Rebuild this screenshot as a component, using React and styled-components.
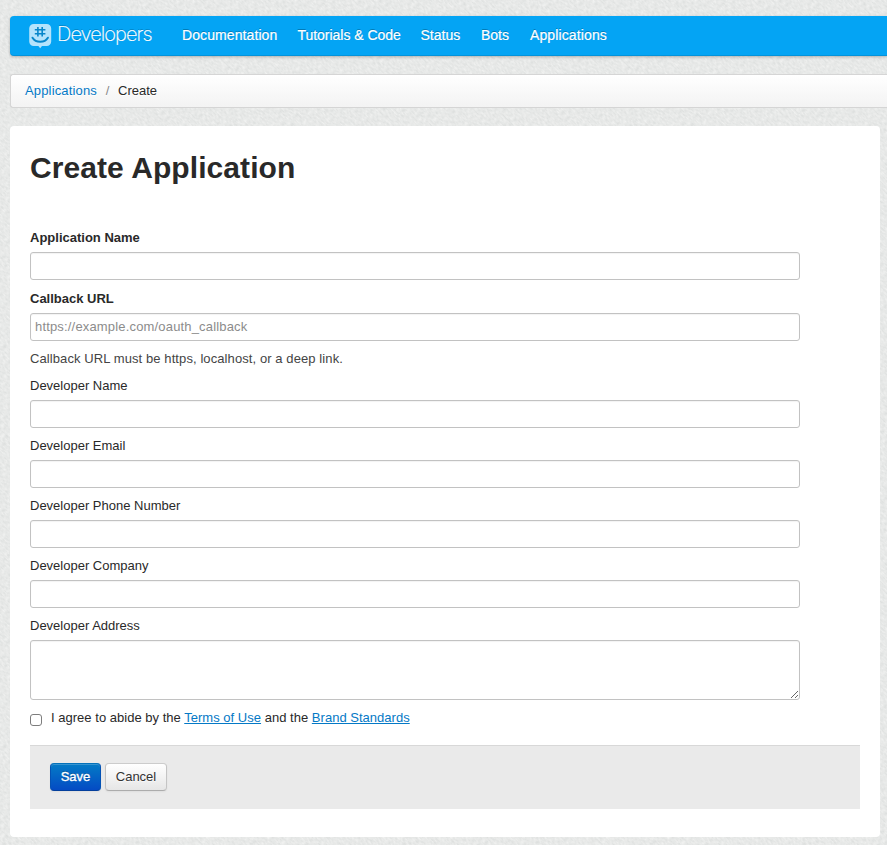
import React from "react";
import styled, { createGlobalStyle } from "styled-components";

const paper = encodeURIComponent(
  `<svg xmlns="http://www.w3.org/2000/svg" width="400" height="400">
    <filter id="g" x="0" y="0" width="100%" height="100%" color-interpolation-filters="sRGB">
      <feTurbulence type="fractalNoise" baseFrequency="0.28 0.6" numOctaves="2" seed="4"/>
      <feColorMatrix values="0.13 0 0 0 0.841  0.12 0 0 0 0.852  0.12 0 0 0 0.848  0 0 0 0 1"/>
    </filter>
    <g transform="rotate(45 200 200)"><rect x="-100" y="-100" width="600" height="600" filter="url(#g)"/></g>
  </svg>`
);

const GlobalStyle = createGlobalStyle`
  * { box-sizing: border-box; }
  html { height: 100%; }
  body {
    margin: 0;
    height: 100%;
    background: #e6e8e7 url("data:image/svg+xml,${paper}");
    color: #292929;
    font: 13px/18px "Liberation Sans", Arial, sans-serif;
  }
`;

const Page = styled.div`
  padding: 16px 0 0 10px;
`;

const NavBar = styled.header`
  display: flex;
  align-items: center;
  height: 40px;
  padding-left: 19px;
  border-radius: 4px 0 0 4px;
  background: #04a4f4;
  box-shadow: 0 1px 3px rgba(0, 0, 0, 0.25), inset 0 -1px 0 rgba(0, 0, 0, 0.1);
`;

const Brand = styled.a`
  display: flex;
  align-items: center;
  width: 153px;
  height: 40px;
  flex: none;
  color: #fff;
  text-decoration: none;
`;

const BrandName = styled.span`
  margin: -4px 0 0 5px;
  font: 200 20px/24px Inter, sans-serif;
  letter-spacing: -0.95px;
  -webkit-text-stroke: 0.2px #fff;
  text-shadow: 0 -1px 0 rgba(0, 0, 0, 0.2);
`;

const Nav = styled.nav`
  display: flex;
  gap: 20px;
  margin-top: -2px;
`;

const NavLink = styled.a`
  width: ${(p) => p.$width}px;
  color: #fff;
  font-size: 14px;
  text-decoration: none;
  white-space: nowrap;
  letter-spacing: ${(p) => p.$spacing}px;
  -webkit-text-stroke: 0.2px #fff;
  text-shadow: 0 -1px 0 rgba(0, 0, 0, 0.25);
`;

const Breadcrumb = styled.div`
  display: flex;
  height: 34px;
  margin-top: 18px;
  padding: 7px 14px;
  border: 1px solid #d5d5d5;
  border-right: 0;
  border-radius: 3px 0 0 3px;
  background: linear-gradient(#fff, #f3f3f3);
  text-shadow: 0 1px 0 #fff;
`;

const Divider = styled.span`
  width: 21px;
  text-align: center;
  color: #888;
`;

const Link = styled.a`
  color: #0479c6;
  letter-spacing: ${(p) => (p.$underlined ? "0.02px" : "0.16px")};
  text-decoration: ${(p) => (p.$underlined ? "underline" : "none")};
  text-underline-offset: 1px;
`;

const Panel = styled.main`
  width: 870px;
  height: 711px;
  margin-top: 18px;
  padding: 24px 20px 28px;
  border-radius: 4px;
  background: #fff;
`;

const Title = styled.h1`
  margin: 0 0 42px;
  font-size: 30px;
  line-height: 36px;
  letter-spacing: 0.08px;
`;

const Form = styled.form`
  display: flex;
  flex-direction: column;
`;

const Field = styled.label`
  display: block;
  margin-bottom: 9px;
`;

const Caption = styled.span`
  display: block;
  margin-bottom: 5px;
  font-weight: ${(p) => (p.$required ? 700 : 400)};
  line-height: ${(p) => (p.$required ? 19 : 18)}px;
`;

const Input = styled.input`
  display: block;
  width: 770px;
  height: 28px;
  padding: 3px 4px 5px;
  border: 1px solid #c2c2c2;
  border-radius: 3px;
  background: #fff;
  box-shadow: inset 0 1px 1px rgba(0, 0, 0, 0.05);
  color: #555;
  font: 13px/18px "Liberation Sans", Arial, sans-serif;
  letter-spacing: 0.17px;
  &::placeholder { color: #8c8c8c; opacity: 1; }
`;

const TextArea = styled(Input).attrs({ as: "textarea" })`
  height: 60px;
  resize: both;
`;

const Help = styled.p`
  margin: 0 0 9px;
  color: #444;
  letter-spacing: 0.09px;
`;

const Agreement = styled.label`
  display: flex;
  height: 18px;
  letter-spacing: 0.02px;
`;

const Checkbox = styled.input`
  appearance: none;
  flex: none;
  width: 12px;
  height: 12px;
  margin: 5px 9px 0 0;
  border: 1px solid #7d7d7d;
  border-radius: 3px;
  background: #fff;
`;

const Actions = styled.div`
  display: flex;
  gap: 4px;
  height: 64px;
  margin-top: 18px;
  padding: 17px 20px 18px;
  border-top: 1px solid #d8d8d8;
  background: #eaeaea;
`;

const Button = styled.button`
  width: ${(p) => p.$width}px;
  height: 28px;
  padding: 0 0 1px;
  border: 1px solid;
  border-color: ${(p) => (p.$primary ? "#0472bb #0452b4 #043f9c" : "#ccc #c4c4c4 #acacac")};
  border-radius: 4px;
  background: ${(p) => (p.$primary ? "linear-gradient(#047bc6, #044bc4)" : "linear-gradient(#fff, #e6e6e6)")};
  box-shadow: inset 0 1px 0 rgba(255, 255, 255, 0.2), 0 1px 2px rgba(0, 0, 0, 0.05);
  color: ${(p) => (p.$primary ? "#fff" : "#333")};
  text-shadow: ${(p) => (p.$primary ? "0 -1px 0 rgba(0,0,0,.25)" : "0 1px 1px rgba(255,255,255,.75)")};
  -webkit-text-stroke: ${(p) => (p.$primary ? "0.35px #fff" : "0")};
  font: 13px/18px "Liberation Sans", Arial, sans-serif;
`;

const Logo = () => (
  <svg width="23" height="26" viewBox="0 0 23 26">
    <path d="M4.700 1h13a4.500 4.500 0 0 1 4.500 4.500v13a4.500 4.500 0 0 1-4.500 4.500h-4.700l-1.800 2.200-1.800-2.200h-4.700a4.500 4.500 0 0 1-4.500-4.500v-13a4.500 4.500 0 0 1 4.500-4.500z" fill="#b4e3fc" />
    <g fill="none" stroke="#0786ca">
      <path d="M8.900 4v9.600M13.200 4v9.600M5.800 6.800h10.600M5.800 10.800h10.600" strokeWidth="1.600" />
      <path d="M3.500 14.700c3.300 5.400 12.100 5.400 15.400 0" strokeWidth="2" strokeLinecap="round" />
    </g>
  </svg>
);

const navItems = [
  ["Documentation", 95.5, 0.09],
  ["Tutorials & Code", 103, -0.03],
  ["Status", 40.5, 0],
  ["Bots", 29, 0],
  ["Applications", 78, 0.12],
];

const developerFields = [
  "Developer Name",
  "Developer Email",
  "Developer Phone Number",
  "Developer Company",
];

export default function App() {
  return (
    <>
      <GlobalStyle />
      <Page>
        <NavBar>
          <Brand href="#">
            <Logo />
            <BrandName>Developers</BrandName>
          </Brand>
          <Nav>
            {navItems.map(([label, width, spacing]) => (
              <NavLink key={label} href="#" $width={width} $spacing={spacing}>{label}</NavLink>
            ))}
          </Nav>
        </NavBar>
        <Breadcrumb>
          <Link>Applications</Link>
          <Divider>/</Divider>
          <span>Create</span>
        </Breadcrumb>
        <Panel>
          <Title>Create Application</Title>
          <Form>
            <Field>
              <Caption $required>Application Name</Caption>
              <Input />
            </Field>
            <Field>
              <Caption $required>Callback URL</Caption>
              <Input placeholder="https://example.com/oauth_callback" />
            </Field>
            <Help>Callback URL must be https, localhost, or a deep link.</Help>
            {developerFields.map((label) => (
              <Field key={label}>
                <Caption>{label}</Caption>
                <Input />
              </Field>
            ))}
            <Field>
              <Caption>Developer Address</Caption>
              <TextArea />
            </Field>
            <Agreement>
              <Checkbox type="checkbox" />
              <span>
                I agree to abide by the <Link $underlined>Terms of Use</Link> and the{" "}
                <Link $underlined>Brand Standards</Link>
              </span>
            </Agreement>
            <Actions>
              <Button type="button" $primary $width={51}>Save</Button>
              <Button type="button" $width={62}>Cancel</Button>
            </Actions>
          </Form>
        </Panel>
      </Page>
    </>
  );
}
